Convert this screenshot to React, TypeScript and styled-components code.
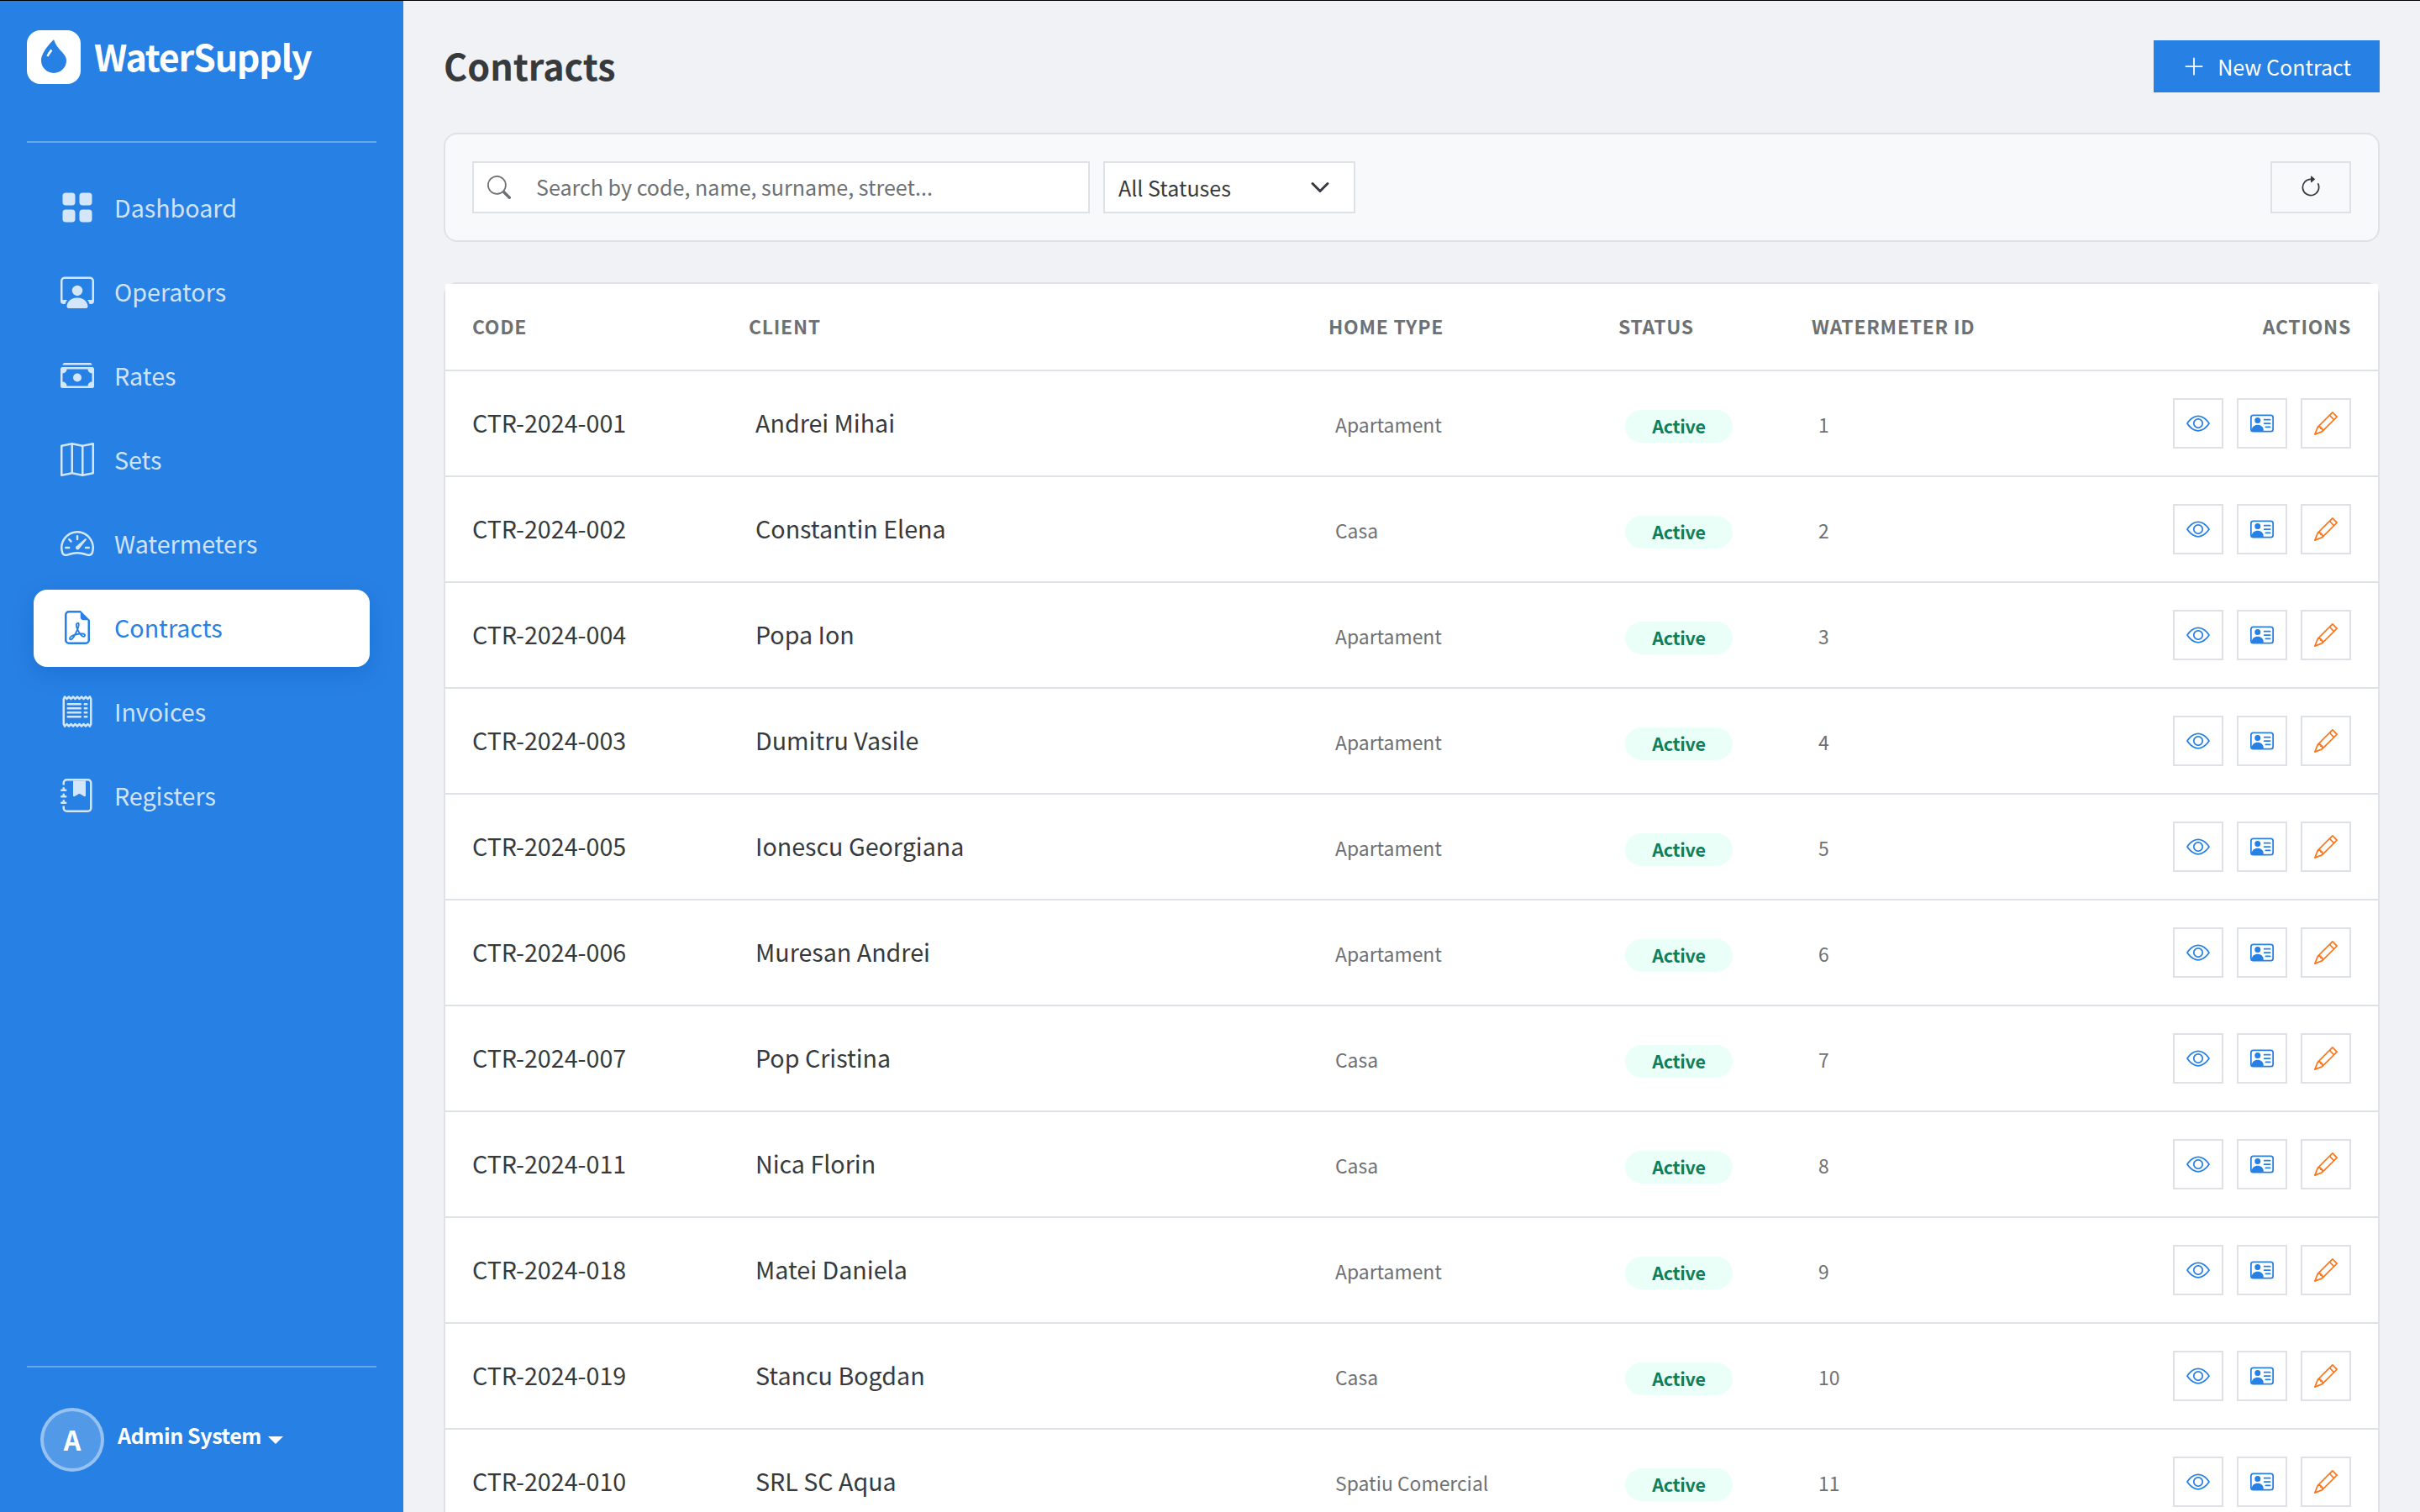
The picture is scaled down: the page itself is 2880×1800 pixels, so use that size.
import { FunctionComponent } from 'react';
import { IconType } from 'react-icons';
import {
  BsArrowClockwise,
  BsCashStack,
  BsDropletFill,
  BsEye,
  BsFileEarmarkPdf,
  BsGridFill,
  BsJournalBookmarkFill,
  BsMap,
  BsPencil,
  BsPersonVcard,
  BsPersonWorkspace,
  BsPlusLg,
  BsReceipt,
  BsSearch,
  BsSpeedometer2,
} from 'react-icons/bs';
import styled, { createGlobalStyle } from 'styled-components';

type NavItem = { label: string; icon: IconType };

type Contract = {
  code: string;
  client: string;
  homeType: string;
  watermeterId: number;
};

const navItems: NavItem[] = [
  { label: 'Dashboard', icon: BsGridFill },
  { label: 'Operators', icon: BsPersonWorkspace },
  { label: 'Rates', icon: BsCashStack },
  { label: 'Sets', icon: BsMap },
  { label: 'Watermeters', icon: BsSpeedometer2 },
  { label: 'Contracts', icon: BsFileEarmarkPdf },
  { label: 'Invoices', icon: BsReceipt },
  { label: 'Registers', icon: BsJournalBookmarkFill },
];

const contracts: Contract[] = [
  { code: 'CTR-2024-001', client: 'Andrei Mihai', homeType: 'Apartament', watermeterId: 1 },
  { code: 'CTR-2024-002', client: 'Constantin Elena', homeType: 'Casa', watermeterId: 2 },
  { code: 'CTR-2024-004', client: 'Popa Ion', homeType: 'Apartament', watermeterId: 3 },
  { code: 'CTR-2024-003', client: 'Dumitru Vasile', homeType: 'Apartament', watermeterId: 4 },
  { code: 'CTR-2024-005', client: 'Ionescu Georgiana', homeType: 'Apartament', watermeterId: 5 },
  { code: 'CTR-2024-006', client: 'Muresan Andrei', homeType: 'Apartament', watermeterId: 6 },
  { code: 'CTR-2024-007', client: 'Pop Cristina', homeType: 'Casa', watermeterId: 7 },
  { code: 'CTR-2024-011', client: 'Nica Florin', homeType: 'Casa', watermeterId: 8 },
  { code: 'CTR-2024-018', client: 'Matei Daniela', homeType: 'Apartament', watermeterId: 9 },
  { code: 'CTR-2024-019', client: 'Stancu Bogdan', homeType: 'Casa', watermeterId: 10 },
  { code: 'CTR-2024-010', client: 'SRL SC Aqua', homeType: 'Spatiu Comercial', watermeterId: 11 },
];

const GlobalStyle = createGlobalStyle`
  :root {
    --primary: #2780e3;
    --body-color: #373a3c;
    --muted: #6e7173;
    --border: #dee2e6;
  }

  *, *::before, *::after {
    box-sizing: border-box;
  }

  body {
    margin: 0;
    overflow: hidden;
    background: #f0f2f6;
    color: var(--body-color);
    font-family: 'Noto Sans CJK SC', 'Noto Sans', sans-serif;
    font-size: 28.65px;
  }

  button, input {
    font-family: inherit;
    color: inherit;
  }

  svg {
    display: block;
    flex-shrink: 0;
  }
`;

const Page = styled.div`
  display: flex;
  height: 1800px;
  border-top: 1px solid #000;
  overflow: hidden;
`;

const Sidebar = styled.aside`
  display: flex;
  flex-direction: column;
  width: 480px;
  flex-shrink: 0;
  padding: 0 32px;
  background: var(--primary);
  color: #fff;
`;

const Brand = styled.div`
  display: flex;
  align-items: center;
  gap: 16px;
  height: 169px;
  padding: 35px 0 68px;
  border-bottom: 2px solid rgba(255, 255, 255, 0.3);
`;

const BrandLogo = styled.div`
  display: grid;
  place-items: center;
  width: 64px;
  height: 64px;
  border-radius: 16px;
  background: #fff;
  color: var(--primary);
  font-size: 40px;
  padding-bottom: 2px;
`;

const BrandName = styled.span`
  padding-bottom: 4px;
  font-size: 43px;
  font-weight: 700;
  line-height: 60px;
  letter-spacing: -1.25px;
`;

const Nav = styled.nav`
  display: flex;
  flex-direction: column;
  gap: 8px;
  flex: 1;
  padding: 32px 8px 0;
`;

const NavLink = styled.a<{ $active?: boolean }>`
  display: flex;
  align-items: center;
  gap: 24px;
  height: 92px;
  padding: 0 32px 2px;
  border-radius: 16px;
  line-height: 48px;
  color: ${({ $active }) => ($active ? 'var(--primary)' : 'rgba(255, 255, 255, 0.8)')};
  background: ${({ $active }) => ($active ? '#fff' : 'transparent')};
  box-shadow: ${({ $active }) => ($active ? '0 8px 24px rgba(0, 70, 180, 0.25)' : 'none')};

  & svg {
    font-size: 40px;
  }
`;

const UserMenu = styled.div`
  display: flex;
  align-items: flex-start;
  height: 174px;
  padding: 48px 16px 0;
  border-top: 2px solid rgba(255, 255, 255, 0.3);
`;

const Avatar = styled.div`
  display: grid;
  place-items: center;
  width: 76px;
  height: 76px;
  margin-right: 16px;
  padding-bottom: 2px;
  border: 4px solid rgba(255, 255, 255, 0.4);
  border-radius: 50%;
  background: rgba(255, 255, 255, 0.2);
  font-size: 32px;
  font-weight: 700;
  line-height: 66px;
`;

const UserName = styled.span`
  display: flex;
  align-items: center;
  gap: 8px;
  height: 64px;
  font-size: 25.07px;
  font-weight: 700;
  line-height: 42px;
  letter-spacing: -0.45px;

  &::after {
    content: '';
    margin-top: 13px;
    border-top: 9px solid #fff;
    border-left: 9px solid transparent;
    border-right: 9px solid transparent;
  }
`;

const Main = styled.main`
  display: flex;
  flex-direction: column;
  flex: 1;
  gap: 48px;
  padding: 47px 48px 0;
`;

const PageHeader = styled.header`
  display: flex;
  align-items: center;
  justify-content: space-between;
  height: 62px;
  flex-shrink: 0;
`;

const Title = styled.h1`
  margin: 0;
  padding-bottom: 4px;
  font-size: 43px;
  font-weight: 700;
  line-height: 56px;
`;

const PrimaryButton = styled.button`
  display: flex;
  align-items: center;
  gap: 14px;
  height: 62px;
  padding: 0 34px 1px;
  border: 0;
  background: var(--primary);
  color: #fff;
  font-size: 25.07px;
  line-height: 42px;

  & svg {
    font-size: 28px;
  }
`;

const FilterCard = styled.section`
  display: flex;
  gap: 16px;
  height: 130px;
  flex-shrink: 0;
  padding: 32px;
  border: 2px solid var(--border);
  border-radius: 16px;
  background: #f8f9fb;
`;

const SearchGroup = styled.label`
  display: flex;
  align-items: center;
  width: 735px;
  padding-left: 16px;
  border: 2px solid var(--border);
  background: #fff;
  color: var(--muted);

  & svg {
    font-size: 28px;
  }
`;

const SearchInput = styled.input`
  flex: 1;
  height: 58px;
  padding: 0 16px 3px 30px;
  border: 0;
  background: transparent;
  font-size: 25.07px;

  &::placeholder {
    color: var(--muted);
    opacity: 1;
  }
`;

const StatusSelect = styled.button`
  display: flex;
  align-items: center;
  justify-content: space-between;
  width: 300px;
  padding: 0 28px 1px 16px;
  border: 2px solid var(--border);
  background: #fff;
  font-size: 25.07px;
  line-height: 42px;
`;

const RefreshButton = styled.button`
  display: grid;
  place-items: center;
  width: 96px;
  margin-left: auto;
  padding: 0;
  border: 2px solid var(--border);
  background: transparent;
  font-size: 28px;
`;

const TableCard = styled.section`
  border: 2px solid var(--border);
  border-radius: 16px;
`;

const Table = styled.table`
  width: 100%;
  table-layout: fixed;
  border-spacing: 0;
  background: #fff;
`;

const HeadCell = styled.th<{ $width: string }>`
  width: ${({ $width }) => $width};
  height: 104px;
  padding: 0 16px 2px;
  border-bottom: 2px solid var(--border);
  color: var(--muted);
  font-size: 22.9px;
  font-weight: 700;
  letter-spacing: 0.75px;
  line-height: 36px;
  text-align: left;
  text-transform: uppercase;

  &:first-child {
    padding-left: 32px;
  }

  &:last-child {
    padding-right: 32px;
    text-align: right;
  }
`;

const Cell = styled.td`
  height: 126px;
  padding: 0 24px 3px;
  border-bottom: 2px solid var(--border);
  line-height: 48px;
  white-space: nowrap;

  &:first-child {
    padding-left: 32px;
  }

  &:nth-child(n + 3) {
    padding-bottom: 1px;
  }

  &:last-child {
    padding: 0 32px 0 0;
  }
`;

const Small = styled.span`
  color: var(--muted);
  font-size: 22.9px;
`;

const StatusBadge = styled.span`
  display: inline-block;
  width: 128px;
  padding: 7.5px 0 10.5px;
  border-radius: 20px;
  background: #eafff8;
  color: #0f7f5b;
  font-size: 21.5px;
  font-weight: 700;
  letter-spacing: -0.25px;
  line-height: 21px;
  text-align: center;
`;

const Actions = styled.div`
  display: flex;
  justify-content: flex-end;
  gap: 16px;
`;

const ActionButton = styled.button<{ $color: string }>`
  display: grid;
  place-items: center;
  width: 60px;
  height: 60px;
  padding: 0;
  border: 2px solid var(--border);
  background: #fff;
  color: ${({ $color }) => $color};
  font-size: 28px;
`;

const ChevronDown = () => (
  <svg width="24" height="24" viewBox="0 0 16 16" fill="none">
    <path
      d="m2 5 6 6 6-6"
      stroke="#343a40"
      strokeWidth="2"
      strokeLinecap="round"
      strokeLinejoin="round"
    />
  </svg>
);

const ContractRow: FunctionComponent<{ contract: Contract }> = ({ contract }) => (
  <tr>
    <Cell>{contract.code}</Cell>
    <Cell>{contract.client}</Cell>
    <Cell>
      <Small>{contract.homeType}</Small>
    </Cell>
    <Cell>
      <StatusBadge>Active</StatusBadge>
    </Cell>
    <Cell>
      <Small>{contract.watermeterId}</Small>
    </Cell>
    <Cell>
      <Actions>
        <ActionButton $color="var(--primary)" aria-label="View">
          <BsEye />
        </ActionButton>
        <ActionButton $color="var(--primary)" aria-label="Client">
          <BsPersonVcard />
        </ActionButton>
        <ActionButton $color="#ff7518" aria-label="Edit">
          <BsPencil />
        </ActionButton>
      </Actions>
    </Cell>
  </tr>
);

const App: FunctionComponent = () => (
  <>
    <GlobalStyle />
    <Page>
      <Sidebar>
        <Brand>
          <BrandLogo>
            <BsDropletFill />
          </BrandLogo>
          <BrandName>WaterSupply</BrandName>
        </Brand>
        <Nav>
          {navItems.map(({ label, icon: Icon }) => (
            <NavLink key={label} $active={label === 'Contracts'}>
              <Icon />
              {label}
            </NavLink>
          ))}
        </Nav>
        <UserMenu>
          <Avatar>A</Avatar>
          <UserName>Admin System</UserName>
        </UserMenu>
      </Sidebar>
      <Main>
        <PageHeader>
          <Title>Contracts</Title>
          <PrimaryButton>
            <BsPlusLg />
            New Contract
          </PrimaryButton>
        </PageHeader>
        <FilterCard>
          <SearchGroup>
            <BsSearch />
            <SearchInput placeholder="Search by code, name, surname, street..." />
          </SearchGroup>
          <StatusSelect>
            All Statuses
            <ChevronDown />
          </StatusSelect>
          <RefreshButton aria-label="Refresh">
            <BsArrowClockwise />
          </RefreshButton>
        </FilterCard>
        <TableCard>
          <Table>
            <thead>
              <tr>
                <HeadCell $width="15%">Code</HeadCell>
                <HeadCell $width="30%">Client</HeadCell>
                <HeadCell $width="15%">Home type</HeadCell>
                <HeadCell $width="10%">Status</HeadCell>
                <HeadCell $width="15%">Watermeter ID</HeadCell>
                <HeadCell $width="15%">Actions</HeadCell>
              </tr>
            </thead>
            <tbody>
              {contracts.map((contract) => (
                <ContractRow key={contract.code} contract={contract} />
              ))}
            </tbody>
          </Table>
        </TableCard>
      </Main>
    </Page>
  </>
);

export default App;
